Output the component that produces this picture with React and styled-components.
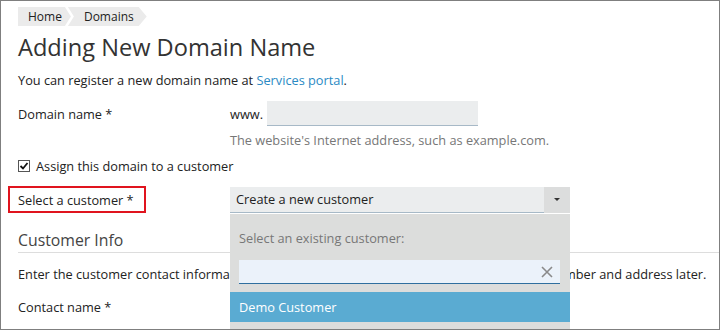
import React from 'react'
import styled, { createGlobalStyle } from 'styled-components'

const GlobalStyle = createGlobalStyle`
  html, body {
    margin: 0;
    padding: 0;
    background: #fff;
  }
  body {
    font-family: 'Open Sans', 'DejaVu Sans', sans-serif;
    font-size: 12.75px;
    color: #222;
  }
`

const Frame = styled.div`
  box-sizing: border-box;
  width: 720px;
  height: 330px;
  border: 1px solid #7f7f7f;
  overflow: hidden;
  padding: 6px 0 0 17px;
`

const Crumbs = styled.div`
  display: flex;
  height: 19px;
`

const Crumb = styled.div`
  display: flex;
  align-items: center;
  height: 19px;
  background: #ebebeb;
  color: #222;
  font-size: 12px;
  padding: 0 ${(p) => (p.first ? 9 : 13)}px 0 ${(p) => (p.first ? 10 : 16)}px;
  margin-left: ${(p) => (p.first ? 0 : -3)}px;
  clip-path: ${(p) =>
    p.first
      ? 'polygon(0 0, calc(100% - 6px) 0, 100% 50%, calc(100% - 6px) 100%, 0 100%)'
      : 'polygon(0 0, calc(100% - 8px) 0, 100% 50%, calc(100% - 8px) 100%, 0 100%, 6px 50%)'};
`

const Title = styled.h1`
  margin: 5px 0 0;
  font-size: 23.6px;
  font-weight: 400;
  color: #333;
  line-height: 32px;
`

const Intro = styled.p`
  margin: 8px 0 0;
  line-height: 18px;
`

const Link = styled.a`
  color: #2a8ac4;
  text-decoration: none;
`

const Row = styled.div`
  display: flex;
  align-items: center;
  margin-top: ${(p) => p.mt || 0}px;
`

const Label = styled.div`
  width: 212px;
  line-height: 18px;
`

const Field = styled.div`
  display: flex;
  align-items: center;
  gap: 4px;
`

const TextInput = styled.div`
  box-sizing: border-box;
  width: 211px;
  height: 25px;
  background: #ebedee;
  border-bottom: 1px solid #a7b9c7;
`

const Hint = styled.div`
  margin: 5px 0 0 212px;
  color: #777;
  line-height: 18px;
`

const Check = styled.label`
  display: flex;
  align-items: center;
  gap: 6px;
  margin-top: 8px;
  line-height: 18px;
`

const Box = styled.span`
  box-sizing: border-box;
  width: 12px;
  height: 12px;
  border: 1px solid #555;
  display: flex;
  align-items: center;
  justify-content: center;
  background: #fff;
`

const SelectRow = styled.div`
  display: flex;
  align-items: center;
  margin: 11px 0 0 -10px;
  position: relative;
`

const Required = styled.div`
  box-sizing: border-box;
  width: 138px;
  height: 27px;
  border: 2px solid #e0141e;
  padding-left: 8px;
  display: flex;
  align-items: center;
  margin-right: 84px;
`

const Select = styled.div`
  display: flex;
  width: 340px;
  height: 26px;
`

const SelectValue = styled.div`
  box-sizing: border-box;
  flex: 1;
  background: #ebedee;
  border-bottom: 1px solid #a7b9c7;
  padding-left: 6px;
  display: flex;
  align-items: center;
`

const Caret = styled.div`
  width: 26px;
  background: #dcdddd;
  display: flex;
  align-items: center;
  justify-content: center;
  &::after {
    content: '';
    border-left: 3px solid transparent;
    border-right: 3px solid transparent;
    border-top: 3px solid #333;
  }
`

const Dropdown = styled.div`
  position: absolute;
  left: 222px;
  top: 28px;
  width: 340px;
  height: 130px;
  background: #dcdddc;
  box-sizing: border-box;
  padding: 15px 0 0;
  z-index: 2;
`

const DropLabel = styled.div`
  color: #777;
  padding-left: 9px;
  line-height: 18px;
`

const Search = styled.div`
  box-sizing: border-box;
  margin: 13px 10px 0 9px;
  height: 24px;
  background: #ebf2fa;
  border-bottom: 1px solid #2f6f9f;
  display: flex;
  align-items: center;
  justify-content: flex-end;
  padding-right: 7px;
`

const Option = styled.div`
  margin-top: 8px;
  height: 30px;
  background: #5aabd2;
  color: #fff;
  padding-left: 9px;
  display: flex;
  align-items: center;
`

const Section = styled.h2`
  margin: 16px 0 0;
  font-size: 15.8px;
  font-weight: 400;
  color: #444;
  line-height: 22px;
  padding-bottom: 1px;
  border-bottom: 1px solid #ddd;
`

const Para = styled.p`
  margin: 12px 0 0;
  line-height: 18px;
  white-space: nowrap;
`

export default function App() {
  return (
    <>
      <GlobalStyle />
      <Frame>
        <Crumbs>
          <Crumb first>Home</Crumb>
          <Crumb>Domains</Crumb>
        </Crumbs>
        <Title>Adding New Domain Name</Title>
        <Intro>
          You can register a new domain name at <Link href="#">Services portal</Link>.
        </Intro>
        <Row mt={12}>
          <Label>Domain name *</Label>
          <Field>
            <span>www.</span>
            <TextInput />
          </Field>
        </Row>
        <Hint>The website's Internet address, such as example.com.</Hint>
        <Check>
          <Box>
            <svg width="10" height="10" viewBox="0 0 10 10">
              <path d="M1.5 5 L4 7.5 L8.5 2" fill="none" stroke="#111" strokeWidth="1.8" />
            </svg>
          </Box>
          Assign this domain to a customer
        </Check>
        <SelectRow>
          <Required>Select a customer *</Required>
          <Select>
            <SelectValue>Create a new customer</SelectValue>
            <Caret />
          </Select>
          <Dropdown>
            <DropLabel>Select an existing customer:</DropLabel>
            <Search>
              <svg width="12" height="12" viewBox="0 0 12 12">
                <path d="M1 1 L11 11 M11 1 L1 11" stroke="#8a8a8a" strokeWidth="1.6" />
              </svg>
            </Search>
            <Option>Demo Customer</Option>
          </Dropdown>
        </SelectRow>
        <Section>Customer Info</Section>
        <Para>
          Enter the customer contact information. You will be able to specify the customer's phone number and address later.
        </Para>
        <Row mt={15}>
          <Label>Contact name *</Label>
        </Row>
      </Frame>
    </>
  )
}
